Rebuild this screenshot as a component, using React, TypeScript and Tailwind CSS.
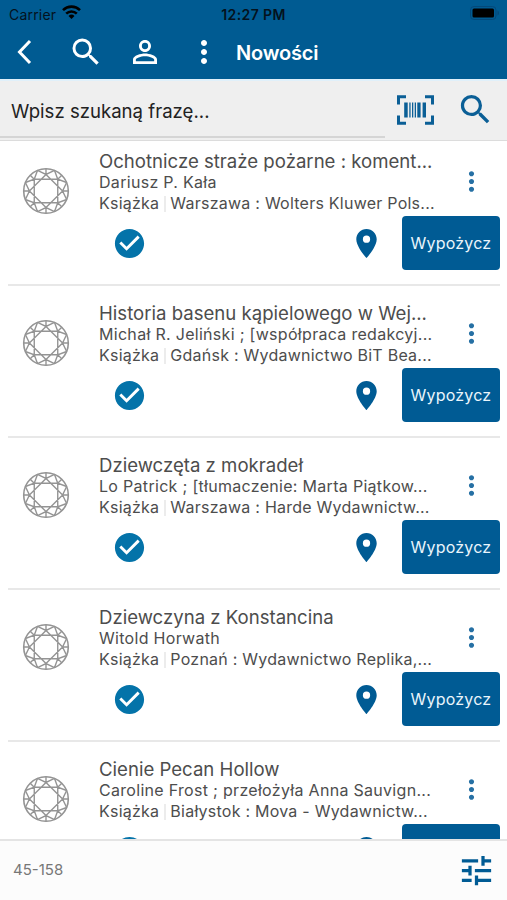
import { MdCheckCircle, MdMoreVert, MdPersonOutline, MdPlace, MdSearch, MdTune } from "react-icons/md";

const books = [
  {
    title: "Ochotnicze straże pożarne : koment...",
    author: "Dariusz P. Kała",
    publisher: "Warszawa : Wolters Kluwer Pols...",
  },
  {
    title: "Historia basenu kąpielowego w Wej...",
    author: "Michał R. Jeliński ; [współpraca redakcyj...",
    publisher: "Gdańsk : Wydawnictwo BiT Bea...",
  },
  {
    title: "Dziewczęta z mokradeł",
    author: "Lo Patrick ; [tłumaczenie: Marta Piątkow...",
    publisher: "Warszawa : Harde Wydawnictw...",
  },
  {
    title: "Dziewczyna z Konstancina",
    author: "Witold Horwath",
    publisher: "Poznań : Wydawnictwo Replika,...",
  },
  {
    title: "Cienie Pecan Hollow",
    author: "Caroline Frost ; przełożyła Anna Sauvign...",
    publisher: "Białystok : Mova - Wydawnictw...",
  },
];

// point on a circle around the middle of the 48x48 diamond
function point(radius: number, degrees: number) {
  const a = (degrees * Math.PI) / 180;
  return `${(24 + radius * Math.cos(a)).toFixed(2)} ${(24 + radius * Math.sin(a)).toFixed(2)}`;
}

const facets = [0, 45, 90, 135, 180, 225, 270, 315]
  .map(
    (a) =>
      `M${point(16.6, a)}L${point(16.6, a + 90)}` +
      `M${point(22.3, a - 22.5)}L${point(16.6, a)}L${point(22.3, a + 22.5)}` +
      `M${point(16.6, a)}L${point(22.3, a)}`
  )
  .join("");

function Diamond() {
  return (
    <svg viewBox="0 0 48 48" className="size-12" fill="none" stroke="#949494" strokeWidth="1.4">
      <circle cx="24" cy="24" r="22.3" strokeWidth="1.6" />
      <path d={facets} />
    </svg>
  );
}

function BarcodeScan() {
  return (
    <svg width="38" height="32" viewBox="0 0 38 32" className="text-[#0b5f96]">
      <path
        d="M2.500 10.500V2.800h7.500M29 2.800h7.500v7.700M36.500 21.500v7.700H29M10 29.200H2.500v-7.700"
        fill="none"
        stroke="currentColor"
        strokeWidth="3"
      />
      <path
        d="M8.200 8.500h3.500v15H8.200zM13.300 8.500h1.300v15h-1.300zM16 8.500h1.300v15H16zM18.700 8.500h1.300v15h-1.300zM21.300 8.500h3.300v15h-3.300zM26.600 8.500h3.400v15h-3.400z"
        fill="currentColor"
      />
    </svg>
  );
}

function StatusBar() {
  return (
    <div className="grid h-7 grid-cols-3 items-center px-[9px] text-[14px] text-[#04121d]">
      <div className="flex items-center gap-1.5">
        <span className="tracking-[0.2px]">Carrier</span>
        <svg width="19" height="14" viewBox="0 0 19 14" fill="none" stroke="#000" strokeWidth="2.6" className="-mt-1">
          <path d="M1 5.1a12.2 12.2 0 0 1 17 0" />
          <path d="M4.2 8.6a7.6 7.6 0 0 1 10.6 0" />
          <path d="M9.5 14 6.5 11a4.3 4.3 0 0 1 6 0z" fill="#000" stroke="none" />
        </svg>
      </div>
      <span className="text-center font-semibold tracking-[0.4px] whitespace-nowrap">12:27 PM</span>
      <svg width="30" height="14" viewBox="0 0 30 14" className="-mt-0.5 -mr-0.5 justify-self-end">
        <rect x=".5" y=".5" width="25.5" height="13" rx="3.5" fill="none" stroke="#04497a" />
        <rect x="2.5" y="2.5" width="21.5" height="9" rx="1.5" fill="#000" />
        <path d="M27.5 4.5c2 .8 2 4.200 0 5z" fill="#04497a" />
      </svg>
    </div>
  );
}

function Book({ book }: { book: (typeof books)[number] }) {
  return (
    <li className="mr-[7px] ml-2 flex h-[152px] shrink-0 border-b-2 border-[#e8e8e8] pt-4">
      <div className="w-[91px] shrink-0 pt-[17px] pl-[14px]">
        <Diamond />
      </div>
      <div className="flex min-w-0 flex-1 flex-col">
        <div className="flex">
          <div className="flex-1 whitespace-nowrap text-[#4d4d4d]">
            <h2 className="text-[18.6px] leading-[22px]">{book.title}</h2>
            <p className="text-[16px] leading-[21px] tracking-[0.3px]">{book.author}</p>
            <p className="flex items-center text-[16px] leading-[21px] tracking-[0.24px]">
              <span>Książka</span>
              <span className="mx-[4.500px] h-4 w-0.5 bg-[#ececec]" />
              <span>{book.publisher}</span>
            </p>
          </div>
          <button className="mt-[15px] mr-[13px] h-8 text-[#2670a4]">
            <MdMoreVert size={31} />
          </button>
        </div>
        <div className="mt-[2px] flex h-[54px] items-center">
          <MdCheckCircle size={35} className="ml-[13px] text-[#0473a9]" />
          <MdPlace size={35} className="ml-auto text-[#005b94]" />
          <button className="ml-[18px] h-[54px] w-[98px] rounded bg-[#005b94] text-[16px] tracking-[0.2px] text-[#eaf5fc]">
            Wypożycz
          </button>
        </div>
      </div>
    </li>
  );
}

export default function App() {
  return (
    <div className="flex h-[900px] w-[507px] flex-col overflow-hidden bg-white font-['Inter',sans-serif]">
      <header className="h-[79px] shrink-0 bg-[#005b92] text-white">
        <StatusBar />
        <nav className="flex h-12 items-center">
          <svg width="18" height="28" viewBox="0 0 18 28" className="ml-4 shrink-0">
            <path d="M14 3 3.500 14 14 25" fill="none" stroke="#fff" strokeWidth="3" />
          </svg>
          <MdSearch size={36} className="ml-[34px]" />
          <MdPersonOutline size={36} className="ml-[23px]" />
          <MdMoreVert size={36} className="ml-[23px]" />
          <h1 className="ml-[14px] pt-0.5 text-[20px] font-semibold tracking-[-0.2px]">Nowości</h1>
        </nav>
      </header>

      <div className="flex h-[62px] shrink-0 border-t-2 border-b border-t-[#e0f0fa] border-b-[#dcdcdc] bg-[#efefef]">
        <div className="flex h-[57px] w-[385px] items-center border-b-2 border-[#d5d5d5] pl-[11px] text-[18.6px] text-[#222]">
          <span className="pt-[7px]">Wpisz szukaną frazę...</span>
        </div>
        <div className="flex items-center pb-0.5 pl-[11px]">
          <BarcodeScan />
          <MdSearch size={39} className="ml-[22px] text-[#0b5f96]" />
        </div>
      </div>

      <main className="min-h-0 flex-1 overflow-hidden">
        <ul className="-mt-[7px] flex flex-col">
          {books.map((book) => (
            <Book key={book.title} book={book} />
          ))}
        </ul>
      </main>

      <footer className="flex h-[61px] shrink-0 items-center justify-between border-t-2 border-[#e4e4e4] bg-[#fcfcfc] pr-[11px] pl-[13px]">
        <span className="text-[15px] text-[#777]">45-158</span>
        <MdTune size={39} className="text-[#005b94]" />
      </footer>
    </div>
  );
}
